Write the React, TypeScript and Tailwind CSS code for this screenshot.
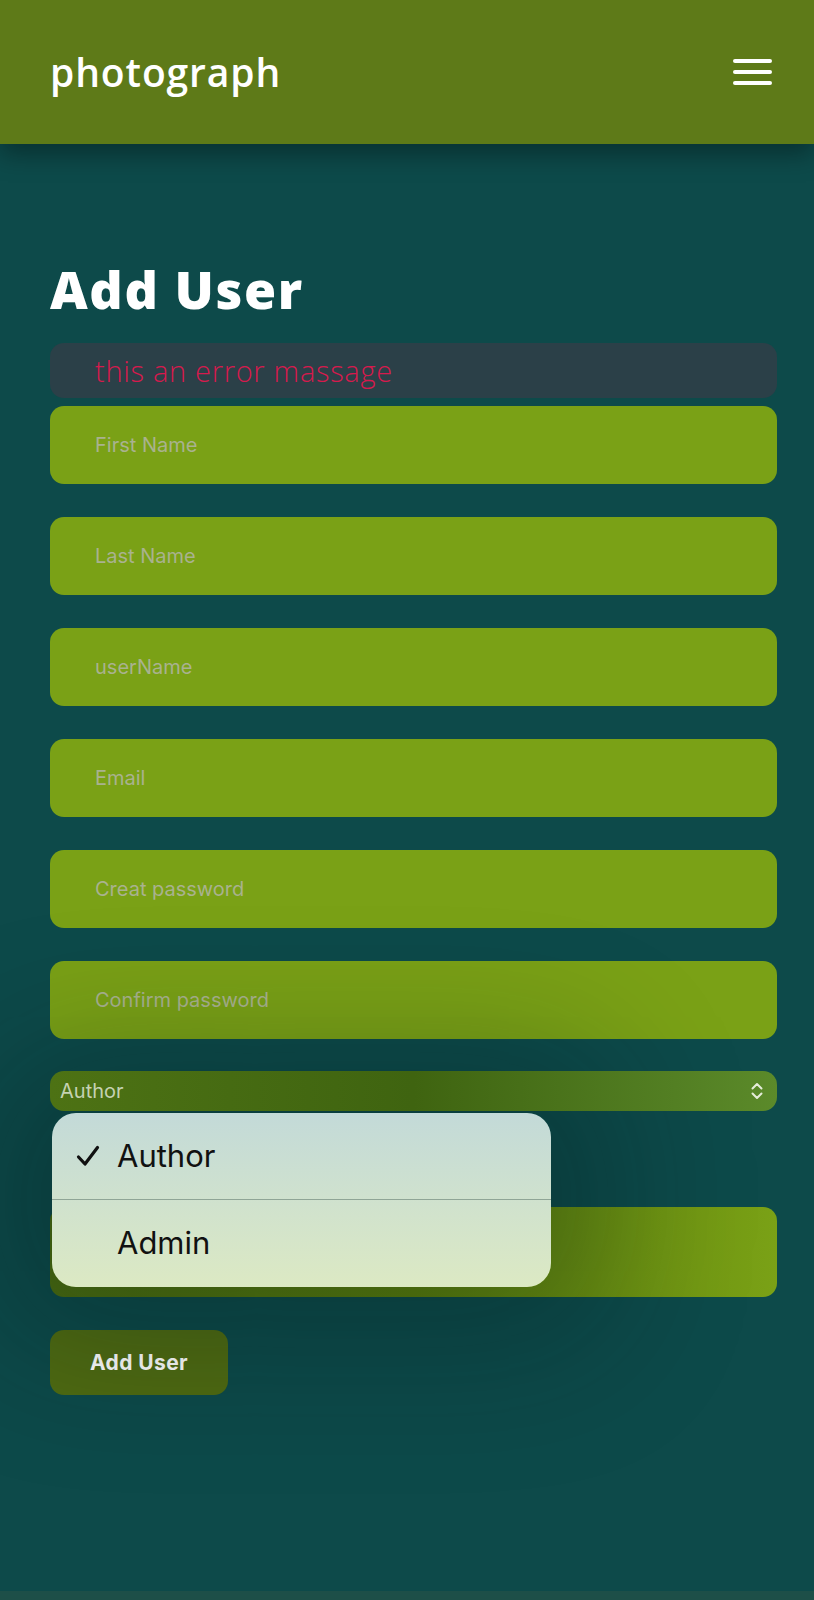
import React from "react";

const fields = ["First Name", "Last Name", "userName", "Email", "Creat password", "Confirm password"];

export default function App() {
  return (
    <div className="relative min-h-[1600px] w-full overflow-hidden bg-[#0d4a4a] flex flex-col" style={{ fontFamily: "Inter, 'Noto Sans', sans-serif" }}>
      <header className="relative z-10 h-[144px] bg-[#5e7a18] pl-[50px] pr-[42px] flex items-center justify-between shadow-[0_10px_24px_rgba(0,0,0,0.35)]">
        <span className="text-white text-[39px] font-semibold tracking-[0.9px]" style={{ fontFamily: "'Open Sans', sans-serif" }}>photograph</span>
        <div className="flex flex-col gap-[7px] w-[39px]">
          <span className="block h-[4px] rounded-full bg-white" />
          <span className="block h-[4px] rounded-full bg-white" />
          <span className="block h-[4px] rounded-full bg-white" />
        </div>
      </header>

      <main className="flex-1 pl-[50px] pr-[37px] pt-[115px]">
        <h1 className="text-white text-[52px] leading-[60px] font-extrabold tracking-[1.6px]" style={{ fontFamily: "'Open Sans', sans-serif" }}>Add User</h1>

        <div className="mt-[24px] h-[55px] rounded-[14px] bg-[#2b4048] pl-[45px] flex items-center">
          <span className="text-[29px] text-[#d61a4d] font-light tracking-[0.7px]" style={{ fontFamily: "'Open Sans', sans-serif" }}>this an error massage</span>
        </div>

        <div className="mt-[8px] flex flex-col gap-[33px]">
          {fields.map((f) => (
            <div key={f} className="h-[78px] rounded-[14px] bg-[#7aa116] pl-[45px] flex items-center">
              <span className="text-[20px] text-[#a9b28f]">{f}</span>
            </div>
          ))}
        </div>

        <div className="relative mt-[32px]">
          <div className="relative z-30 h-[40px] rounded-[14px] bg-gradient-to-r from-[#4d7214] via-[#3f6410] to-[#5b8a2a] pl-[10px] pr-[14px] flex items-center justify-between">
            <span className="text-[20px] text-[#c5d2b2]">Author</span>
            <svg width="12" height="18" viewBox="0 0 12 18" fill="none" stroke="#e5ecd9" strokeWidth="2" strokeLinecap="round" strokeLinejoin="round">
              <path d="M1.5 6.5 L6 2 L10.5 6.5" />
              <path d="M1.5 11.5 L6 16 L10.5 11.5" />
            </svg>
          </div>

          <div className="mt-[96px] h-[90px] rounded-[14px] bg-gradient-to-r from-[#4a6c10] via-[#5a7e0c] to-[#7aa116]" />

          <div className="absolute left-[2px] top-[42px] z-20 w-[499px] rounded-[24px] overflow-hidden bg-gradient-to-b from-[#c3dad8] to-[#dce9c3] shadow-[0_0_140px_60px_rgba(0,20,20,0.28)]">
            <div className="h-[87px] flex items-center border-b border-[#8fa596]">
              <svg className="ml-[24px] mr-[17px]" width="24" height="22" viewBox="0 0 24 22" fill="none" stroke="#111" strokeWidth="3.2" strokeLinecap="round" strokeLinejoin="round">
                <path d="M2.5 12 L9 19 L21.5 2.5" />
              </svg>
              <span className="text-[31px] text-[#111]">Author</span>
            </div>
            <div className="h-[87px] flex items-center pl-[65px]">
              <span className="text-[31px] text-[#111]">Admin</span>
            </div>
          </div>
        </div>

        <button className="mt-[33px] h-[65px] w-[178px] rounded-[14px] bg-[#4f6b12] text-white text-[21px] font-bold tracking-[0.4px]">Add User</button>
      </main>

      <div className="h-[9px] bg-[#1d4f48]" />
    </div>
  );
}
